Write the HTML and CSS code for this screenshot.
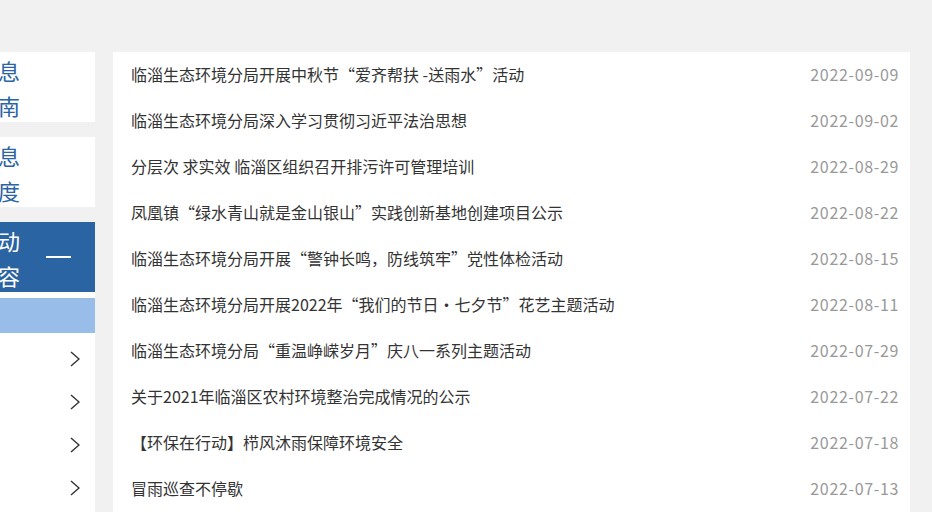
FILE: index.html
```
<html>
  <head>
    <meta charset="UTF-8" />
    <link rel="stylesheet" href="styles.css">
  </head>
  <body>
    <div class="wrap">
      <div class="side">
        <div class="sideBox">
          <div class="sideLabel">政府信息<br>公开指南</div>
        </div>
        <div class="sideBox">
          <div class="sideLabel">政府信息<br>公开制度</div>
        </div>
        <div class="sideBox sideActive">
          <div class="sideLabel">法定主动<br>公开内容</div>
          <span class="sideMinus"></span>
        </div>
        <div class="subList">
          <div class="subCurrent">机构职能</div>
          <div class="subItem"><span>政策文件</span><svg class="chev" viewBox="0 0 10 16"><polyline points="1,1 9,8 1,15" /></svg></div>
          <div class="subItem"><span>规划计划</span><svg class="chev" viewBox="0 0 10 16"><polyline points="1,1 9,8 1,15" /></svg></div>
          <div class="subItem"><span>环境质量</span><svg class="chev" viewBox="0 0 10 16"><polyline points="1,1 9,8 1,15" /></svg></div>
          <div class="subItem"><span>行政许可</span><svg class="chev" viewBox="0 0 10 16"><polyline points="1,1 9,8 1,15" /></svg></div>
        </div>
      </div>
      <div class="main">
        <ul class="newsList">
          <li><a>临淄生态环境分局开展中秋节“爱齐帮扶 -送雨水”活动</a><span class="date">2022-09-09</span></li>
          <li><a>临淄生态环境分局深入学习贯彻习近平法治思想</a><span class="date">2022-09-02</span></li>
          <li><a>分层次 求实效 临淄区组织召开排污许可管理培训</a><span class="date">2022-08-29</span></li>
          <li><a>凤凰镇“绿水青山就是金山银山”实践创新基地创建项目公示</a><span class="date">2022-08-22</span></li>
          <li><a>临淄生态环境分局开展“警钟长鸣，防线筑牢”党性体检活动</a><span class="date">2022-08-15</span></li>
          <li><a>临淄生态环境分局开展2022年“我们的节日•七夕节”花艺主题活动</a><span class="date">2022-08-11</span></li>
          <li><a>临淄生态环境分局“重温峥嵘岁月”庆八一系列主题活动</a><span class="date">2022-07-29</span></li>
          <li><a>关于2021年临淄区农村环境整治完成情况的公示</a><span class="date">2022-07-22</span></li>
          <li><a>【环保在行动】栉风沐雨保障环境安全</a><span class="date">2022-07-18</span></li>
          <li><a>冒雨巡查不停歇</a><span class="date">2022-07-13</span></li>
        </ul>
      </div>
    </div>
  </body>
</html>
```
FILE: styles.css
```
body {
  margin: 0;
  background-color: #f1f1f1;
  font-family: "Noto Sans CJK SC", "Noto Sans", sans-serif;
  overflow: hidden;
}
.wrap {
  display: flex;
  gap: 18px;
  padding-top: 52px;
  margin-left: -155px;
}
.side {
  width: 250px;
  flex: none;
  display: flex;
  flex-direction: column;
}
.sideBox {
  height: 70px;
  background-color: #fff;
  margin-bottom: 15px;
  display: flex;
  align-items: center;
  padding-left: 87px;
}
.sideLabel {
  font-size: 22px;
  line-height: 35px;
  color: #2a64a4;
  white-space: nowrap;
  padding-top: 2px;
}
.sideActive {
  background-color: #2b64a3;
  margin-bottom: 0;
}
.sideActive .sideLabel {
  color: #fff;
}
.sideMinus {
  display: block;
  width: 25px;
  height: 2px;
  margin-left: 26px;
  background-color: #fff;
}
.subList {
  background-color: #fff;
  padding-top: 6px;
  height: 300px;
}
.subCurrent {
  height: 35px;
  line-height: 35px;
  background-color: #99bde9;
  color: #99bde9;
  font-size: 15px;
  padding-left: 40px;
  margin-bottom: 4px;
}
.subItem {
  height: 43px;
  display: flex;
  align-items: center;
  justify-content: space-between;
  padding-left: 40px;
  padding-right: 15px;
  font-size: 15px;
  color: #fff;
}
.chev {
  width: 10px;
  height: 16px;
}
.chev polyline {
  fill: none;
  stroke: #333;
  stroke-width: 1.4;
}
.main {
  width: 797px;
  flex: none;
  background-color: #fff;
  min-height: 470px;
}
.newsList {
  list-style: none;
  margin: 0;
  padding: 0 12px 0 18px;
}
.newsList li {
  display: flex;
  justify-content: space-between;
  height: 46px;
  line-height: 44px;
  padding-bottom: 2px;
  box-sizing: border-box;
  font-size: 16px;
}
.newsList a {
  color: #333;
}
.date {
  color: #999;
  letter-spacing: 0.65px;
  margin-right: -1px;
}
```
